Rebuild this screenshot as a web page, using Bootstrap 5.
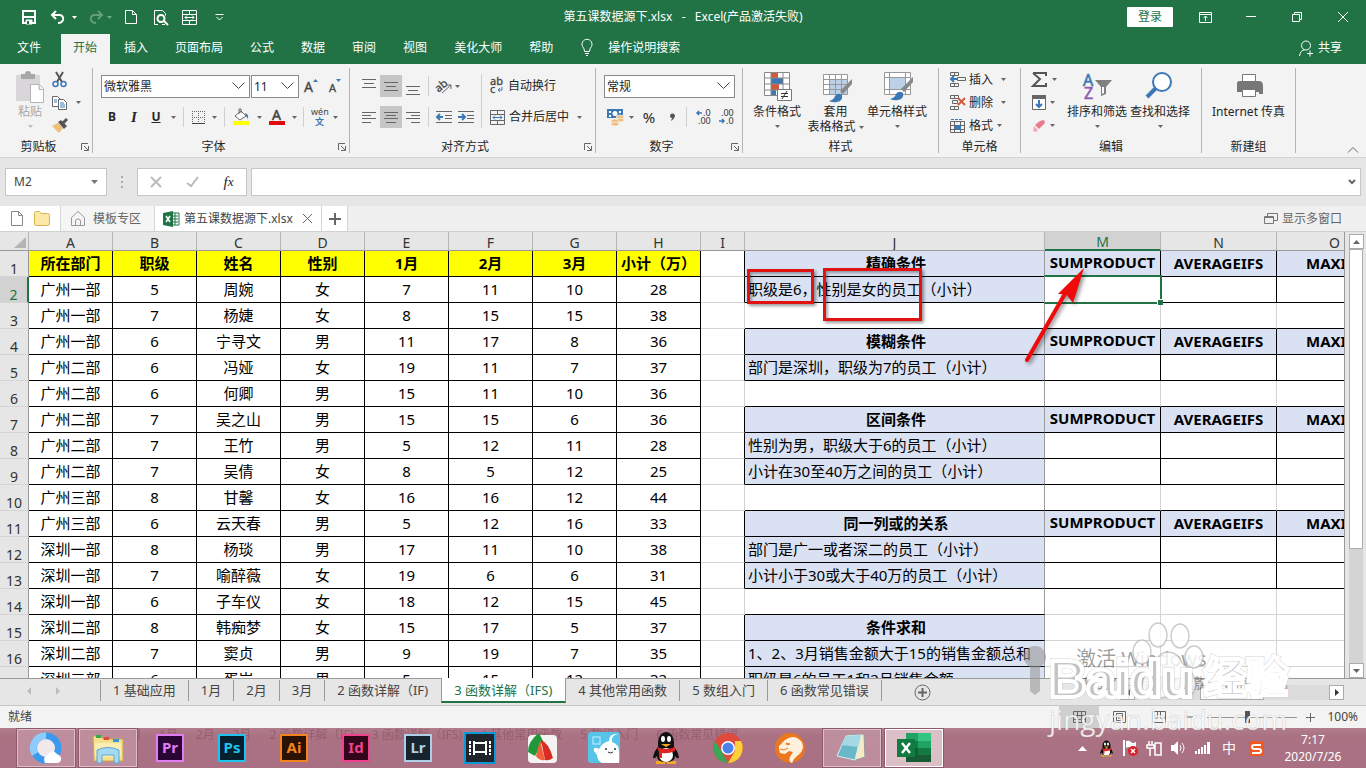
<!DOCTYPE html>
<html lang="zh-CN">
<head>
<meta charset="utf-8">
<meta name="viewport" content="width=device-width, initial-scale=1">
<title>第五课数据源下.xlsx - Excel</title>
<link href="https://cdn.jsdelivr.net/npm/bootstrap@5.3.0/dist/css/bootstrap.min.css" rel="stylesheet">
<style>
:root{--xl:#217346;--chrome:#e6e6e6;--ribbon:#f3f3f3;--ink:#262626}
body{font-family:"Noto Sans","Noto Sans CJK SC",sans-serif;font-size:12px;line-height:16px;color:var(--ink);background:#fff}
svg{display:block;flex:none;overflow:visible}
svg.ln{fill:none;stroke:#666;stroke-width:1}
button{font:inherit;color:inherit;background:none;border:0;padding:0;display:flex;align-items:center;justify-content:center;flex:none}
a{color:inherit;text-decoration:none}
.green{background:var(--xl);color:#fff}
.titlebar{height:34px}
.titleside{flex:1 1 0}
.titlebar svg.ln,.tabs svg.ln{stroke:#fff}
.s10{width:10px}.s12{width:12px}.s15{width:15px}.s20{width:20px}.s22{width:22px}.s24{width:24px}.s26{width:26px}.s30{width:30px}.s46{width:46px}
.login{background:#fff;color:var(--xl);height:20px;margin-right:9px;border-radius:1px}
.tabs{height:30px}
.tabs>a{padding:6px 13px 8px 14px;color:#fff}
.tabs>a:first-child{padding:6px 20px 8px 17px}
.tabs>a.on{background:var(--ribbon);color:var(--xl);padding:6px 13px 8px 12px}
.ribbon{height:94px;background:var(--ribbon);border-bottom:1px solid #d2d2d2;position:relative}
.grp{border-right:1px solid #b5b5b5;margin:4px 0;display:flex;flex-direction:column;flex:none}
.grp>.body{flex:1 1 0;display:flex;min-height:0}
.cap{height:12px;display:flex;align-items:center;text-align:center}
.cap>span{flex:1}
.g1{width:93px}.g2{width:257px}.g3{width:246px}.g4{width:147px}.g5{width:196px}.g6{width:82px}.g7{width:181px}.g8{width:94px}
.rows{display:flex;flex-direction:column;gap:9px;padding:7px 0 0 8px}
.rows>div{display:flex;align-items:center;height:22px}
.rows button{height:22px}
.rows button.on{background:#c6c6c6}
.three{display:flex;flex-direction:column}
.three>div{display:flex;align-items:center;height:23px}
.bar{width:1px;height:20px;background:#d0d0d0;flex:none}
.bar.tall{height:54px;margin-top:6px}
.pick{appearance:none;height:23px;border:1px solid #8a8a8a;border-radius:0;padding:1px 2px 0;font-size:12px;line-height:20px;color:#262626;background:#fff url("data:image/svg+xml,%3Csvg xmlns='http://www.w3.org/2000/svg' width='13' height='8'%3E%3Cpath d='M.5.5l6 6 6-6' fill='none' stroke='%23444'/%3E%3C/svg%3E") no-repeat right 4px center}
.pf{width:149px}.ps{width:48px;margin-left:1px}.pn{width:131px}
.big{flex-direction:column;justify-content:flex-start;padding-top:3px;line-height:15px}
.big svg.ic{width:32px;height:32px;margin-bottom:1px}
.big .car{margin-top:6px}
.big span .car{margin-top:0}
.paste svg.ic{width:28px}
.b60{width:60px}.b57{width:57px}.b66{width:66px}
.car{width:5px;height:3px;fill:#666}
.serif{font-family:"Liberation Serif",serif;font-size:15px;font-style:italic}
.fbar{background:var(--chrome);height:48px;padding:10px 5px}
.fbar .bx{border:1px solid #c6c6c6;background:#fff;height:28px;display:flex;align-items:center}
.fbar input{border:0;outline:0;background:none;min-width:0;color:#444;font-size:12px}
.fbar .dots{margin:0 14px 0 15px}
.namebox{width:102px}.fxbox{width:110px}
.docs{height:26px;background:#f0f0f0;border-bottom:1px solid #d0d0d0;color:#666}
.docs>div{height:25px;display:flex;align-items:center;border-right:1px solid #d5d5d5}
.docs .wh{background:#fff}
.dk1{width:61px}.dk2{width:94px;background:#f5f5f5}.dk3{width:167px}
.sheetwrap{flex:1 1 0;min-height:0;position:relative}
.view{flex:1 1 0;min-width:0;overflow:hidden;position:relative}
.grid{table-layout:fixed;width:1393px;border-collapse:separate;border-spacing:0;font-size:15px;line-height:20px;color:#000}
.grid td,.grid th{padding:0 0 2px;height:26px;border:solid #d4d4d4;border-width:0 1px 1px 0;text-align:center;white-space:nowrap;overflow:hidden;vertical-align:middle;font-weight:400}
.grid thead th{height:19px;line-height:15px;background:var(--chrome);color:#333;border-color:#b4b4b4;border-bottom-color:#999;font-size:14px;padding:2px 0 0}
.grid tbody th{background:var(--chrome);color:#333;border-right-color:#999;vertical-align:bottom;line-height:15px;font-size:14px;padding-bottom:0}
.grid tbody td:nth-child(-n+9){border-color:#000}
.grid td:nth-child(11){border-right-color:#999;text-align:left;padding-left:3px}
.grid .hd td:nth-child(n+11),.grid .top td{font-weight:700}
.grid .hd td:nth-child(11){text-align:center}
.grid .hd td:nth-child(12){padding-bottom:3px}
.grid .hd td:nth-child(10),.grid .dt td:nth-child(10){border-right-color:#000}
.grid .hd td:nth-child(11),.grid .dt td:nth-child(11){background:#d9e1f2;border-bottom-color:#000}
.grid .gp td:nth-child(11){border-bottom-color:#000}
.grid .hd:not(.solo) td:nth-child(n+12){background:#d9e1f2;border-color:#000}
.grid .dt:not(.solo) td:nth-child(n+12){border-color:#000}
.grid .gp:not(.solo) td:nth-child(n+12){border-bottom-color:#000}
.grid .top td:nth-child(-n+9){background:#ff0}
.grid thead th.cur{background:#d2d2d2;color:var(--xl);border-bottom:2px solid var(--xl)}
.grid tbody th.cur{background:#d2d2d2;color:var(--xl);border-right:2px solid var(--xl)}
.corner{fill:#b4b4b4;margin-left:14px}
.cw-h{width:29px}.cw-a{width:84px}.cw-i{width:44px}.cw-j{width:300px}.cw-m{width:116px}
.selbox{position:absolute;left:1044px;top:43px;width:118px;height:29px;border:2px solid var(--xl);border-left-color:#999;border-left-width:1px}
.selbox::after{content:"";position:absolute;right:-3px;bottom:-3px;width:6px;height:6px;background:var(--xl);border:solid #fff;border-width:1px 0 0 1px}
.mark-red{position:absolute;border:3px solid #e01212;box-shadow:2px 2px 3px #0006,inset 2px 2px 3px #0005}
.m1{left:747px;top:37px;width:67px;height:35px}
.m2{left:823px;top:36px;width:99px;height:53px}
.arrow{position:absolute;left:1020px;top:30px;filter:drop-shadow(2px 2px 2px #0007)}
.vsb{width:22px;background:var(--chrome);border-left:1px solid #999;padding:2px 3px 0 4px}
.vsb .ab,.hsb .ab{width:15px;height:15px;background:#fff;border:1px solid #ababab}
.vsb .th{height:300px;background:#fff;border:1px solid #ababab}
.vsb .tr{flex:1;background:#d4d4d4}
.sheets{height:28px;background:var(--chrome);border-top:1px solid #999;border-bottom:1px solid #c6c6c6;font-size:13px;color:#444}
.sheets>a{height:24px;line-height:22px;padding:0 13px 0 12px;position:relative}
.sheets>a:not(.on)::after{content:"";position:absolute;right:0;top:1px;height:21px;border-right:1px solid #999}
.sheets>a.on{background:#fff;color:var(--xl);border-bottom:2px solid var(--xl);height:25px;margin-top:-1px;border-left:1px solid #999;border-right:1px solid #999;line-height:24px}
.sheets>a.pre::after{display:none}
.navs{width:101px;border-right:1px solid #999;height:21px;margin-top:1px;padding-left:27px}
.addsheet{margin-left:32px}
.hsb{width:224px;margin-right:22px;background:#dcdcdc;height:15px}
.hsb .th{width:64px;height:15px;background:#fff;border:1px solid #ababab;margin-left:65px}
.status{height:22px;background:var(--ribbon);color:#444}
.status input{width:90px;height:12px;appearance:none;background:linear-gradient(#999,#999) center/100% 1px no-repeat}
.status input::-webkit-slider-thumb{appearance:none;width:5px;height:12px;background:#555}
.vw{width:40px;height:22px}
.vw.on{background:#cfcfcf}
.task{height:40px;background:linear-gradient(#b17d8c,#aa7283 20%,#a87082);color:#fff;position:relative;padding-left:15px}
.task .ap{width:62px;height:40px;position:relative}
.task .ap.run{width:58px;height:38px;margin:1px 2px;background:#c395a4cc;border:1px solid #dcbfc8;outline:1px solid #8c5a6a}
.task .ap.front{background:#dcc0c8;border-color:#fff}
.ghost{position:absolute;left:83px;top:-1px;font-size:12px;color:#7a4455;opacity:.45;display:flex;gap:18px;white-space:nowrap}
.tray>span{width:24px;height:20px;display:flex;align-items:center;justify-content:center}
.tray>.ime{width:30px;font-size:14px}
.clock{width:74px;text-align:center;font-size:12px;line-height:17px}
.adobe{width:28px;height:28px;border:2px solid;font-size:15px;font-weight:700;line-height:22px;text-align:center;display:block}
.pr{color:#e27cf5;background:#2a0634}.psd{color:#22c3ee;background:#04202c}.ai{color:#f58220;background:#2b1204}.idd{color:#f04090;background:#330518}.lr{color:#aed0e6;background:#172430}
.wm{position:absolute;right:66px;bottom:18px;pointer-events:none}
.wm .brand{font-family:"Liberation Sans","Noto Sans CJK SC",sans-serif;font-weight:700}
.wm .site{font-family:"Open Sans",sans-serif}
</style>
</head>
<body class="vh-100 d-flex flex-column overflow-hidden">

<header class="green">
  <div class="titlebar d-flex align-items-center">
    <div class="titleside d-flex align-items-center">
      <button class="s22 ms-3 me-1" aria-label="保存"><svg class="ln ms-1" width="14" height="14"><path d="M1 1h12v12H1z" stroke-width="2"/><path d="M2 7h10" stroke-width="2"/><path d="M4 10h6v4H4z" fill="#fff"/><path d="M5 11h2v3H5z" fill="#217346" stroke="none"/></svg></button>
      <button class="s22 ms-1" aria-label="撤消"><svg class="ln" width="15" height="14"><path d="M2 5h8q4 1 3 5-1 3-5 3M6 1L2 5l4 4" stroke-width="2"/></svg></button>
      <svg class="car ms-1" style="fill:#fff" viewBox="0 0 5 3"><path d="M0 0h5L2.500 3z"/></svg>
      <button class="s22 ms-2" aria-label="恢复"><svg class="ln" width="15" height="14" opacity=".3"><path d="M13 5H5Q1 6 2 10q1 3 5 3M9 1l4 4-4 4" stroke-width="2"/></svg></button>
      <svg class="car" style="fill:#fff;opacity:.4" viewBox="0 0 5 3"><path d="M0 0h5L2.500 3z"/></svg>
      <button class="s30 ms-1" aria-label="新建"><svg class="ln" width="12" height="14"><path d="M.5.5h7l4 4v9H.5zM7.500.5v4h4"/></svg></button>
      <button class="s30" aria-label="打印预览"><svg class="ln" width="14" height="15"><path d="M4 14.500H.5V.5h8l3 3v2M8 14.500h3"/><circle cx="7" cy="8.500" r="3.500" stroke-width="2"/><path d="M10 11l4 4" stroke-width="2"/></svg></button>
      <button class="s26" aria-label="合并"><svg class="ln" width="15" height="15"><path d="M.5.5h14v14H.5zM.5 4.500h14M.5 10.500h14M7.500.5v4M7.500 10.500v4M3 7.500h9M5 5.500l-2 2 2 2M10 5.500l2 2-2 2"/></svg></button>
      <button class="s30" aria-label="自定义"><svg class="ln ms-1" width="9" height="7"><path d="M.5.5h8M1.500 3l3 3 3-3"/></svg></button>
    </div>
    <div style="white-space:pre">第五课数据源下.xlsx   -   Excel(产品激活失败)</div>
    <div class="titleside d-flex align-items-center justify-content-end">
      <button class="login s46">登录</button>
      <button class="s46" aria-label="功能区"><svg class="ln" width="13" height="11"><path d="M.5.5h12v10H.5zM.5 2.500h12M6.500 9V4M4.500 6l2-2 2 2"/></svg></button>
      <button class="s46" aria-label="最小化"><svg class="ln" width="10" height="2"><path d="M0 .5h10"/></svg></button>
      <button class="s46" aria-label="还原"><svg class="ln" width="10" height="10"><path d="M.5 2.500h7v7h-7zM2.500 2.500v-2h7v7h-2"/></svg></button>
      <button class="s46" aria-label="关闭"><svg class="ln" width="10" height="10"><path d="M0 0l10 10M10 0L0 10"/></svg></button>
    </div>
  </div>
  <nav class="tabs d-flex">
    <a href="#">文件</a><a href="#" class="on">开始</a><a href="#">插入</a><a href="#">页面布局</a><a href="#">公式</a><a href="#">数据</a><a href="#">审阅</a><a href="#">视图</a><a href="#">美化大师</a><a href="#">帮助</a>
    <a href="#" class="d-flex"><svg class="ln me-3" width="12" height="16"><path d="M3.500 12.500q0-3-2-5a5 5 0 1 1 9 0q-2 2-2 5zM4 14.500h4M5 16.500h2" transform="translate(1 -1)"/></svg>操作说明搜索</a>
    <a href="#" class="d-flex ms-auto pe-4"><svg class="ln me-1" width="15" height="16"><circle cx="7" cy="5.500" r="4.500"/><path d="M.5 16q1-6 5-6M8 13.500h6M11 10.500v6"/></svg>共享</a>
  </nav>
</header>

<section class="ribbon d-flex">
  <div class="grp g1">
    <div class="body">
      <button class="big paste ps-3 pe-2" style="color:#a8a8a8"><svg class="ic" viewBox="0 0 28 32"><path d="M0 4h24v26H0z" fill="#d9d6d9"/><path d="M5 3h4a3 3 0 0 1 6 0h4v5H5z" fill="#a8a8a8"/><path d="M14.500 13.500h9l4 4v14h-13zM23 13.500v5h4" fill="#fff" stroke="#b4b4b4"/></svg>粘贴<svg class="car" style="fill:#bbb" viewBox="0 0 5 3"><path d="M0 0h5L2.500 3z"/></svg></button>
      <div class="three">
        <div><svg width="16" height="16"><path d="M4 0l6 10M11 0L5 10" stroke="#555" stroke-width="2"/><g fill="none" stroke="#3b78b5" stroke-width="1.500"><circle cx="3.500" cy="12" r="2.500"/><circle cx="11.500" cy="12" r="2.500"/></g></svg></div>
        <div><svg class="ln" width="16" height="16"><path d="M.5 1.500h5l3 3v7h-8z" fill="#fff"/><path d="M6.500 4.500h5l3 3v7h-8z" fill="#fff"/><path d="M2 5h3M2 7h3M8 8h4M8 10h5M8 12h5" stroke="#3b78b5"/></svg><svg class="car ms-2" viewBox="0 0 5 3"><path d="M0 0h5L2.500 3z"/></svg></div>
        <div><svg width="17" height="15"><path d="M0 8l6-3 5 5-4 5z" fill="#eec078"/><path d="M6 4l3-2 6 6-3 3z" fill="#555"/><path d="M11 5l4-4" stroke="#555" stroke-width="3"/></svg></div>
      </div>
    </div>
    <div class="cap"><span>剪贴板</span><button class="s15" aria-label="剪贴板选项"><svg class="ln" width="8" height="8"><path d="M.5 7V.5H7M3 3l4 4M7.500 3v4.500H3"/></svg></button></div>
  </div>

  <div class="grp g2">
    <div class="body rows">
      <div>
        <select class="pick pf" aria-label="字体"><option>微软雅黑</option></select><select class="pick ps" aria-label="字号"><option>11</option></select>
        <button class="s24" aria-label="增大字号"><svg width="14" height="14"><text x="0" y="13" font-size="14" fill="#444" stroke="#444" stroke-width=".3">A</text><path d="M9 3h5L11.500 0z" fill="#3b78b5"/></svg></button>
        <button class="s24" aria-label="减小字号"><svg width="12" height="14"><text x="0" y="13" font-size="11" fill="#444" stroke="#444" stroke-width=".3">A</text><path d="M7 0h5L9.500 3z" fill="#3b78b5"/></svg></button>
      </div>
      <div>
        <button class="s22 fw-bold">B</button><button class="s22 serif fw-bold">I</button><button class="s22 text-decoration-underline fw-bold">U</button><button class="s12" aria-label="下划线"><svg class="car" viewBox="0 0 5 3"><path d="M0 0h5L2.500 3z"/></svg></button>
        <i class="bar mx-1"></i>
        <button class="s20" aria-label="边框"><svg class="ln" width="13" height="13"><path d="M.5 0v12M6.500 0v12M12.500 0v12M0 .5h13M0 6.500h13" stroke-dasharray="1 1"/><path d="M0 12.500h13" stroke="#444"/></svg></button><button class="s12" aria-label="边框选项"><svg class="car" viewBox="0 0 5 3"><path d="M0 0h5L2.500 3z"/></svg></button>
        <i class="bar mx-1"></i>
        <button class="s24" aria-label="填充颜色"><svg width="16" height="16"><path d="M2 7l6-5 5 5-6 4z" fill="#fff" stroke="#666"/><path d="M6 5V0h2v4" fill="none" stroke="#666"/><path d="M12 4q4 1 3 6l-2-3z" fill="#3b78b5"/><path d="M0 12h16v4H0z" fill="#ff0"/></svg></button><button class="s12" aria-label="填充选项"><svg class="car" viewBox="0 0 5 3"><path d="M0 0h5L2.500 3z"/></svg></button>
        <button class="s24" aria-label="字体颜色"><svg width="16" height="16"><text x="3" y="11" font-size="14" fill="#444" stroke="#444" stroke-width=".5">A</text><path d="M0 12h16v4H0z" fill="#e00b0b"/></svg></button><button class="s10" aria-label="字体颜色选项"><svg class="car" viewBox="0 0 5 3"><path d="M0 0h5L2.500 3z"/></svg></button>
        <i class="bar mx-1"></i>
        <button class="s22" aria-label="拼音"><svg width="16" height="16"><text x="0" y="6" font-size="9" fill="#444">wén</text><text x="4" y="16" font-size="9" font-weight="700" fill="#3b78b5">文</text></svg></button><button class="s10" aria-label="拼音选项"><svg class="car" viewBox="0 0 5 3"><path d="M0 0h5L2.500 3z"/></svg></button>
      </div>
    </div>
    <div class="cap"><span>字体</span><button class="s15" aria-label="字体选项"><svg class="ln" width="8" height="8"><path d="M.5 7V.5H7M3 3l4 4M7.500 3v4.500H3"/></svg></button></div>
  </div>

  <div class="grp g3">
    <div class="body">
      <div class="rows" style="width:131px">
        <div>
          <button class="s22" aria-label="顶端对齐"><svg class="ln" width="14" height="14"><path d="M0 .5h14M2 4.500h10M0 8.500h14"/></svg></button><button class="s22 on" aria-label="垂直居中"><svg class="ln" width="14" height="14"><path d="M0 3.500h14M2 7.500h10M0 11.500h14"/></svg></button><button class="s22" aria-label="底端对齐"><svg class="ln" width="14" height="14"><path d="M0 7.500h14M2 11.500h10M0 15.500h14"/></svg></button>
          <i class="bar mx-1"></i>
          <button class="s22" aria-label="方向"><svg width="16" height="15"><text x="0" y="11" font-size="11" fill="#444" stroke="#444" stroke-width=".3" transform="rotate(-40 5 9)">ab</text><path d="M6 14L15 6M11 6h4v4" fill="none" stroke="#666"/></svg></button><svg class="car" viewBox="0 0 5 3"><path d="M0 0h5L2.500 3z"/></svg>
        </div>
        <div>
          <button class="s22" aria-label="左对齐"><svg class="ln" width="14" height="11"><path d="M0 .5h14M0 3.500h9M0 6.500h14M0 10.500h9"/></svg></button><button class="s22 on" aria-label="居中"><svg class="ln" width="14" height="11"><path d="M0 .5h14M2 3.500h10M0 6.500h14M2 10.500h10"/></svg></button><button class="s22" aria-label="右对齐"><svg class="ln" width="14" height="11"><path d="M0 .5h14M5 3.500h9M0 6.500h14M5 10.500h9"/></svg></button>
          <i class="bar mx-1"></i>
          <button class="s22" aria-label="减少缩进"><svg class="ln" width="16" height="12"><path d="M0 .5h16M9 4.500h7M9 7.500h7M0 11.500h16"/><path d="M7 6H1M4 3L1 6l3 3" stroke="#3b78b5" stroke-width="2"/></svg></button><button class="s22" aria-label="增加缩进"><svg class="ln" width="16" height="12"><path d="M0 .5h16M9 4.500h7M9 7.500h7M0 11.500h16"/><path d="M0 6h6M4 3l3 3-3 3" stroke="#3b78b5" stroke-width="2"/></svg></button>
        </div>
      </div>
      <i class="bar tall"></i>
      <div class="rows">
        <div><button><svg class="me-1" width="14" height="16"><text x="0" y="7" font-size="11" fill="#444" stroke="#444" stroke-width=".3">ab</text><text x="0" y="15" font-size="11" fill="#444" stroke="#444" stroke-width=".3">c</text><path d="M12 9v3H8M10 10l-2 2 2 2" fill="none" stroke="#3b78b5"/></svg>自动换行</button></div>
        <div><button><svg class="ln me-1" width="15" height="15"><path d="M.5.5h14v14H.5zM.5 4.500h14M.5 10.500h14M7.500.5v4M7.500 10.500v4"/><path d="M3 7.500h9M5 5.500l-2 2 2 2M10 5.500l2 2-2 2" stroke="#3b78b5"/></svg>合并后居中</button><svg class="car ms-2" viewBox="0 0 5 3"><path d="M0 0h5L2.500 3z"/></svg></div>
      </div>
    </div>
    <div class="cap"><span>对齐方式</span><button class="s15" aria-label="对齐选项"><svg class="ln" width="8" height="8"><path d="M.5 7V.5H7M3 3l4 4M7.500 3v4.500H3"/></svg></button></div>
  </div>

  <div class="grp g4">
    <div class="body rows">
      <div><select class="pick pn" aria-label="数字格式"><option>常规</option></select></div>
      <div>
        <button class="s22" aria-label="会计格式"><svg width="17" height="16"><path d="M0 0h16v9H0z" fill="#3b78b5"/><path d="M2 2h2v2H2zM12 2h2v2h-2zM2 6h2v2H2z" fill="#fff"/><circle cx="8" cy="4.500" r="2.500" fill="#fff"/><g fill="#edbf7b" stroke="#f3f3f3" stroke-width=".7"><ellipse cx="13" cy="8" rx="4" ry="2"/><ellipse cx="13" cy="11" rx="4" ry="2"/><ellipse cx="8" cy="12" rx="4" ry="2"/><ellipse cx="8" cy="15" rx="4" ry="2"/></g></svg></button><button class="s10" aria-label="会计选项"><svg class="car" viewBox="0 0 5 3"><path d="M0 0h5L2.500 3z"/></svg></button>
        <button class="s26" style="font-size:15px">%</button><button class="s20" aria-label="千位分隔"><svg width="5" height="8"><path d="M0 3a2.500 2.500 0 1 1 4 2Q3 7 1 8L2 5Q0 5 0 3" fill="#555"/></svg></button>
        <i class="bar mx-1"></i>
        <button class="s26" aria-label="增加小数"><svg width="16" height="16"><text x="7" y="7" font-size="9" fill="#333">.0</text><text x="2" y="15" font-size="9" fill="#333">.00</text><path d="M6 4H1M3 2L1 4l2 2" fill="none" stroke="#3b78b5" stroke-width="1.500"/></svg></button>
        <button class="s20" aria-label="减少小数"><svg width="16" height="16"><text x="2" y="7" font-size="9" fill="#333">.00</text><text x="7" y="15" font-size="9" fill="#333">.0</text><path d="M0 12h5M3 10l2 2-2 2" fill="none" stroke="#3b78b5" stroke-width="1.500"/></svg></button>
      </div>
    </div>
    <div class="cap"><span>数字</span><button class="s15" aria-label="数字选项"><svg class="ln" width="8" height="8"><path d="M.5 7V.5H7M3 3l4 4M7.500 3v4.500H3"/></svg></button></div>
  </div>

  <div class="grp g5">
    <div class="body ps-1">
      <button class="big b60"><svg class="ic" viewBox="0 0 32 32"><path d="M3.500 1.500h25v23h-25z" fill="#fff"/><path d="M10 1h7v6h-7zM10 13h8v6h-8z" fill="#d2593c"/><path d="M10 7h12v6H10zM10 19h5v6h-5z" fill="#3b78b5"/><path d="M3.500 1.500h25v23h-25zM3.500 7h25M3.500 13h25M3.500 19h25M10 1v24M22 1v24" fill="none" stroke="#888"/><path d="M16.500 18.500h14v11h-14z" fill="#fff" stroke="#777"/><path d="M20 22.500h7M20 25.500h7M26 20l-5 8" stroke="#333"/></svg>条件格式<svg class="car" viewBox="0 0 5 3"><path d="M0 0h5L2.500 3z"/></svg></button>
      <button class="big b57"><svg class="ic" viewBox="0 0 32 32"><path d="M3.500 3.500h24v20h-24z" fill="#fff"/><path d="M9 8h18v15H9z" fill="#bcd0e8"/><path d="M3.500 3.500h24v20h-24zM3.500 8.500h24M3.500 13.500h24M3.500 18.500h24M9.500 3v20M15.500 3v20M21.500 3v20" fill="none" stroke="#999"/><path d="M32 8v5L23 23l-3-3z" fill="#888"/><path d="M9 30q5-1 6-5 3-4 7-1 1 6-5 7-4 1-8-1" fill="#3b78b5"/></svg><span>套用<br>表格格式 <svg class="car d-inline-block align-middle" viewBox="0 0 5 3"><path d="M0 0h5L2.500 3z"/></svg></span></button>
      <button class="big b66"><svg class="ic" viewBox="0 0 32 32"><path d="M3.500 1.500h26v22h-26z" fill="#fff"/><path d="M3.500 1.500h26v22h-26zM3.500 6.500h26M3.500 18.500h26M8.500 1v22M24.500 1v22" fill="none" stroke="#999"/><path d="M9 7h15v11H9z" fill="#bcd0e8"/><path d="M32 6v5L23 21l-3-3z" fill="#888"/><path d="M9 28q5-1 6-5 3-4 7-1 1 6-5 7-4 1-8-1" fill="#3b78b5"/></svg>单元格样式<svg class="car" viewBox="0 0 5 3"><path d="M0 0h5L2.500 3z"/></svg></button>
    </div>
    <div class="cap"><span>样式</span></div>
  </div>

  <div class="grp g6">
    <div class="body three" style="padding-left:11px">
      <div><button><svg class="ln me-1" width="15" height="15"><path d="M.5.5h8v3h-8zM.5 11.500h8v3h-8zM4.500 0v3.500M4.500 11v4M7.500 5.500h8v3h-8z"/><path d="M7 7H1M4 4L1 7l3 3" stroke="#3b78b5" stroke-width="2"/></svg>插入</button><svg class="car ms-2" viewBox="0 0 5 3"><path d="M0 0h5L2.500 3z"/></svg></div>
      <div><button><svg class="ln me-1" width="15" height="15"><path d="M.5.5h8v3h-8zM.5 11.500h8v3h-8zM4.500 0v3.500M4.500 11v4M2.500 5.500h5v3h-5z"/><path d="M8 3l7 7M15 3l-7 7" stroke="#d2593c" stroke-width="2"/></svg>删除</button><svg class="car ms-2" viewBox="0 0 5 3"><path d="M0 0h5L2.500 3z"/></svg></div>
      <div><button><svg class="ln me-1" width="15" height="15"><path d="M.5 3.500h14v11H.5zM.5 7.500h14M.5 11.500h14M4.500 3v11M10.500 3v11"/><path d="M1 1.500h12" stroke="#3b78b5" stroke-dasharray="3 1"/><path d="M5 7h6v5H5z" fill="#3b78b5" stroke="none"/></svg>格式</button><svg class="car ms-1" viewBox="0 0 5 3"><path d="M0 0h5L2.500 3z"/></svg></div>
    </div>
    <div class="cap"><span>单元格</span></div>
  </div>

  <div class="grp g7">
    <div class="body">
      <div class="three" style="width:43px;padding-left:11px">
        <div><svg width="16" height="15"><path d="M1 1h13v3M1 1l7 6-7 7h13v-3" fill="none" stroke="#555" stroke-width="2"/></svg><svg class="car ms-1" viewBox="0 0 5 3"><path d="M0 0h5L2.500 3z"/></svg></div>
        <div><svg class="ln" width="14" height="15"><path d="M.5.5h13v14H.5z" fill="#fff"/><path d="M0 2h14" stroke-width="4"/><path d="M7 5v7M4 9l3 3 3-3" stroke="#3b78b5" stroke-width="2"/></svg><svg class="car ms-1" viewBox="0 0 5 3"><path d="M0 0h5L2.500 3z"/></svg></div>
        <div><svg width="14" height="14"><path d="M8 2l4-1 1 3-6 6-4-4z" fill="#ea7a8e"/><path d="M2 7l4 4-2 2-3-1z" fill="#f0aab6"/></svg><svg class="car ms-1" viewBox="0 0 5 3"><path d="M0 0h5L2.500 3z"/></svg></div>
      </div>
      <button class="big b66"><svg class="ic" viewBox="0 0 32 32"><text x="2" y="15" font-size="16" fill="#3b78b5" stroke="#3b78b5" stroke-width=".6">A</text><text x="3" y="28" font-size="16" fill="#8e5ab0" stroke="#8e5ab0" stroke-width=".6">Z</text><path d="M14 9h17l-6 7v7l-5 2v-9z" fill="#808080"/><path d="M21 16h2v6l-2 1z" fill="#fff"/></svg>排序和筛选<svg class="car" viewBox="0 0 5 3"><path d="M0 0h5L2.500 3z"/></svg></button>
      <button class="big b60"><svg class="ic" viewBox="0 0 32 32"><circle cx="18" cy="11" r="9" fill="#fff" stroke="#3b78b5" stroke-width="2"/><path d="M12 17L3 26" stroke="#3b78b5" stroke-width="4"/></svg>查找和选择<svg class="car" viewBox="0 0 5 3"><path d="M0 0h5L2.500 3z"/></svg></button>
    </div>
    <div class="cap"><span>编辑</span></div>
  </div>

  <div class="grp g8">
    <div class="body justify-content-center"><button class="big"><svg class="ic" viewBox="0 0 32 32"><path d="M4 12q0-2 3-2h19q4 0 4 5v8h-4v-7H4z" fill="#777"/><path d="M4 12h22v9H4z" fill="#777"/><path d="M9.500 3.500h13v7h-13zM9.500 18.500h13v7h-13z" fill="#fff" stroke="#777"/></svg>Internet 传真</button></div>
    <div class="cap"><span>新建组</span></div>
  </div>
  <button class="ms-auto align-self-end mb-1 me-2" aria-label="折叠功能区"><svg class="ln" width="10" height="6"><path d="M0 5.500l5-5 5 5"/></svg></button>
</section>

<section class="fbar d-flex">
  <div class="bx namebox px-1"><input class="flex-fill ps-1" value="M2" aria-label="名称框"><svg class="me-1" width="7" height="4" fill="#777"><path d="M0 0h7L3.500 4z"/></svg></div>
  <svg class="dots align-self-center" width="1" height="14"><path d="M0 1h2M0 6h2M0 11h2" stroke="#aaa" stroke-width="2" transform="translate(-1 1)"/></svg>
  <div class="bx fxbox justify-content-around me-1">
    <button aria-label="取消"><svg width="10" height="10" stroke="#bbb" stroke-width="2"><path d="M0 0l10 10M10 0L0 10"/></svg></button>
    <button aria-label="输入"><svg width="13" height="10" fill="none" stroke="#bbb" stroke-width="2"><path d="M1 6l4 3 7-9"/></svg></button>
    <button aria-label="插入函数" class="serif">f<small>x</small></button>
  </div>
  <div class="bx flex-fill"><input class="flex-fill px-2" aria-label="编辑栏"><svg class="me-1" width="8" height="6" fill="none" stroke="#666" stroke-width="2"><path d="M1 1l3 3 3-3"/></svg></div>
</section>

<section class="docs d-flex">
  <div class="wh dk1"><svg class="ms-2" width="18" height="16" viewBox="-3 0 18 16" fill="#fff" stroke="#888"><path d="M.5.5h7l4 4v10H.5zM7.500.5v4h4"/></svg><svg class="ms-2" width="17" height="15"><path d="M.5 2.500q0-2 2-2h3l2 2h6q2 0 2 2v8q0 2-2 2h-11q-2 0-2-2z" fill="#fce9a6" stroke="#d8b04c"/></svg></div>
  <div class="dk2"><svg class="mx-2" width="16" height="16" viewBox="-2 0 16 16" fill="none" stroke="#999"><path d="M.5 6.500l6.500-6 6.500 6v8H.5zM4.500 14v-4q0-2 2.500-2t2.500 2v4"/></svg>模板专区</div>
  <div class="wh dk3"><svg class="ms-2 me-1" width="17" height="16"><path d="M9 2h7v12H9z" fill="#fff" stroke="#217346"/><path d="M9 5h6M9 8h6M9 11h6M12 2v12" stroke="#217346"/><path d="M0 2l10-2v16L0 14z" fill="#217346"/><path d="M3 5l4 6M7 5l-4 6" stroke="#fff" stroke-width="1.500"/></svg><span style="color:#444">第五课数据源下.xlsx</span><button class="ms-auto me-2" aria-label="关闭标签"><svg width="11" height="11" stroke="#666"><path d="M1 1l9 9M10 1l-9 9"/></svg></button></div>
  <div class="wh justify-content-center s26"><button aria-label="新建标签"><svg width="12" height="12" stroke="#666" stroke-width="2"><path d="M0 6h12M6 0v12"/></svg></button></div>
  <button class="ms-auto me-4"><svg class="me-1" width="14" height="11" fill="none" stroke="#777"><path d="M.5 3.500h9v7h-9zM3.500 3v-2.500h10v7h-4M.5 4.500h9"/></svg>显示多窗口</button>
</section>

<main class="sheetwrap d-flex">
  <div class="view">
    <table class="grid">
      <colgroup><col class="cw-h"><col span="8" class="cw-a"><col class="cw-i"><col class="cw-j"><col span="3" class="cw-m"></colgroup>
      <thead><tr><th><svg class="corner" width="12" height="11"><path d="M12 0v11H0z"/></svg><th>A<th>B<th>C<th>D<th>E<th>F<th>G<th>H<th>I<th>J<th class="cur">M<th>N<th>O</tr></thead>
      <tbody>
      <tr class="hd top"><th>1<td>所在部门<td>职级<td>姓名<td>性别<td>1月<td>2月<td>3月<td>小计（万）<td><td>精确条件<td>SUMPRODUCT<td>AVERAGEIFS<td>MAXIFS
      <tr class="dt"><th class="cur">2<td>广州一部<td>5<td>周婉<td>女<td>7<td>11<td>10<td>28<td><td>职级是6，性别是女的员工（小计）<td><td><td>
      <tr class="gp"><th>3<td>广州一部<td>7<td>杨婕<td>女<td>8<td>15<td>15<td>38<td><td><td><td><td>
      <tr class="hd"><th>4<td>广州一部<td>6<td>宁寻文<td>男<td>11<td>17<td>8<td>36<td><td>模糊条件<td>SUMPRODUCT<td>AVERAGEIFS<td>MAXIFS
      <tr class="dt"><th>5<td>广州二部<td>6<td>冯娅<td>女<td>19<td>11<td>7<td>37<td><td>部门是深圳，职级为7的员工（小计）<td><td><td>
      <tr class="gp"><th>6<td>广州二部<td>6<td>何卿<td>男<td>15<td>11<td>10<td>36<td><td><td><td><td>
      <tr class="hd"><th>7<td>广州二部<td>7<td>吴之山<td>男<td>15<td>15<td>6<td>36<td><td>区间条件<td>SUMPRODUCT<td>AVERAGEIFS<td>MAXIFS
      <tr class="dt"><th>8<td>广州二部<td>7<td>王竹<td>男<td>5<td>12<td>11<td>28<td><td>性别为男，职级大于6的员工（小计）<td><td><td>
      <tr class="dt"><th>9<td>广州二部<td>7<td>吴倩<td>女<td>8<td>5<td>12<td>25<td><td>小计在30至40万之间的员工（小计）<td><td><td>
      <tr class="gp"><th>10<td>广州三部<td>8<td>甘馨<td>女<td>16<td>16<td>12<td>44<td><td><td><td><td>
      <tr class="hd"><th>11<td>广州三部<td>6<td>云天春<td>男<td>5<td>12<td>16<td>33<td><td>同一列或的关系<td>SUMPRODUCT<td>AVERAGEIFS<td>MAXIFS
      <tr class="dt"><th>12<td>深圳一部<td>8<td>杨琰<td>男<td>17<td>11<td>10<td>38<td><td>部门是广一或者深二的员工（小计）<td><td><td>
      <tr class="dt"><th>13<td>深圳一部<td>7<td>喻醉薇<td>女<td>19<td>6<td>6<td>31<td><td>小计小于30或大于40万的员工（小计）<td><td><td>
      <tr class="gp solo"><th>14<td>深圳一部<td>6<td>子车仪<td>女<td>18<td>12<td>15<td>45<td><td><td><td><td>
      <tr class="hd solo"><th>15<td>深圳二部<td>8<td>韩痴梦<td>女<td>15<td>17<td>5<td>37<td><td>条件求和<td><td><td>
      <tr class="dt solo"><th>16<td>深圳二部<td>7<td>窦贞<td>男<td>9<td>19<td>7<td>35<td><td>1、2、3月销售金额大于15的销售金额总和<td><td><td>
      <tr class="dt solo"><th>17<td>深圳三部<td>6<td>蛋岩<td>男<td>5<td>15<td>12<td>32<td><td>职级是6的员工1和2月销售金额<td><td><td>
      </tbody>
    </table>
    <div class="selbox"></div>
    <div class="mark-red m1"></div>
    <div class="mark-red m2"></div>
    <svg class="arrow" width="75" height="106" viewBox="0 0 75 106"><path d="M7 98L46 30" stroke="#f00b0b" stroke-width="4" stroke-linecap="round"/><path d="M64 6L38 32l8 0 7 9z" fill="#f00b0b"/></svg>
  </div>
  <div class="vsb d-flex flex-column">
    <button class="ab" aria-label="向上滚动"><svg width="7" height="4" fill="#666"><path d="M0 4h7L3.500 0z"/></svg></button>
    <div class="th"></div><div class="tr"></div>
    <button class="ab" aria-label="向下滚动"><svg width="7" height="4" fill="#666"><path d="M0 0h7L3.500 4z"/></svg></button>
  </div>
</main>

<nav class="sheets d-flex">
  <div class="navs d-flex align-items-center"><svg width="5" height="8" fill="#bbb"><path d="M4 0v8L0 4z"/></svg><svg width="5" height="8" fill="#bbb" class="ms-4"><path d="M0 0v8l4-4z"/></svg></div>
  <a href="#">1 基础应用</a><a href="#">1月</a><a href="#">2月</a><a href="#">3月</a><a href="#" class="pre">2 函数详解（IF)</a><a href="#" class="on">3 函数详解（IFS)</a><a href="#">4 其他常用函数</a><a href="#">5 数组入门</a><a href="#">6 函数常见错误</a>
  <button class="addsheet align-self-center" aria-label="新工作表"><svg class="ln" width="17" height="17"><circle cx="8.500" cy="8.500" r="7.500"/><path d="M4 8.500h9M8.500 4v9" stroke-width="2"/></svg></button>
  <div class="hsb d-flex ms-auto align-self-center">
    <button class="ab" aria-label="向左滚动"><svg width="4" height="7" fill="#666"><path d="M4 0v7L0 3.500z"/></svg></button><div class="th"></div><button class="ab ms-auto" aria-label="向右滚动"><svg width="4" height="7" fill="#333"><path d="M0 0v7l4-3.500z"/></svg></button>
  </div>
</nav>

<footer>
  <div class="status d-flex align-items-center ps-2 pe-2">
    <span class="me-auto">就绪</span>
    <button class="vw on" aria-label="普通"><svg class="ln" width="13" height="12"><path d="M.5.5h12v11H.5zM.5 4.500h12M.5 8.500h12M4.500 0v12M8.500 0v12"/></svg></button>
    <button class="vw" aria-label="页面布局"><svg class="ln" width="13" height="12"><path d="M.5.5h12v11H.5zM3.500 2.500h6v7h-6zM5 5h3M5 7h3"/></svg></button>
    <button class="vw" aria-label="分页预览"><svg class="ln" width="14" height="12"><path d="M.5.5h13v11H.5zM5.500 0v7h-5M8.500 0v7h5"/></svg></button>
    <button class="s20" aria-label="缩小"><svg class="ln" width="8" height="2"><path d="M0 1h8"/></svg></button>
    <input class="mx-2" type="range" min="10" max="190" value="90" aria-label="缩放">
    <button class="s10" aria-label="放大"><svg class="ln" width="9" height="9"><path d="M0 4.500h9M4.500 0v9"/></svg></button>
    <span class="ms-2 ps-1">100%</span>
  </div>

  <div class="task d-flex align-items-center">
    <div class="ghost" aria-hidden="true"><span>1 基础应用</span><span>1月</span><span>2月</span><span>3月</span><span>2 函数详解（IF)</span><span>3 函数详解（IFS)</span><span>4 其他常用函数</span><span>5 数组入门</span><span>6 函数常见错误</span></div>
    <button class="ap run" aria-label="浏览器"><svg width="32" height="32" viewBox="0 0 32 32"><circle cx="16" cy="16" r="12" fill="none" stroke="#3b9af0" stroke-width="7"/><path d="M5 22A12 12 0 0 1 16 4" fill="none" stroke="#8ecdfb" stroke-width="7"/><circle cx="16" cy="16" r="9" fill="#f3e9ec"/><path d="M15 31q-3-6 3-8 4-7 9-1 5 2 4 6-1 3-4 3z" fill="#fff"/></svg></button>
    <button class="ap run" aria-label="资源管理器"><svg width="32" height="32" viewBox="0 0 32 32"><path d="M1 4h8l2 3h20v22H2z" fill="#f4df8c" stroke="#c8a648"/><path d="M4 3h5v3H4z" fill="#39a845"/><path d="M12 5h5v3h-5z" fill="#d94d3b"/><path d="M21 7h6v3h-6z" fill="#3b95d4"/><path d="M3 11h26v14H3z" fill="#f9edb4"/><path d="M5 18q11-5 22 0v13h-5v-8H10v8H5z" fill="#a5d9f0" stroke="#5aa7d0"/></svg></button>
    <button class="ap"><span class="adobe pr">Pr</span></button>
    <button class="ap"><span class="adobe psd">Ps</span></button>
    <button class="ap"><span class="adobe ai">Ai</span></button>
    <button class="ap"><span class="adobe idd">Id</span></button>
    <button class="ap"><span class="adobe lr">Lr</span></button>
    <button class="ap" aria-label="视频"><svg width="32" height="32"><path d="M1 1h30v30H1z" fill="#20242b" stroke="#1097d8" stroke-width="2"/><path d="M6 9v14M10 9v14M22 9v14M26 9v14" stroke="#fff" stroke-width="2" stroke-dasharray="3 1"/><path d="M10 11h12v9H10z" fill="none" stroke="#fff" stroke-width="2"/></svg></button>
    <button class="ap" aria-label="图像"><svg width="32" height="32"><rect x="2" y="3" width="29" height="28" rx="4" fill="#f5f3f1"/><path d="M13 1l4 8L9 24l-7-4Q2 9 13 1" fill="#21973b"/><path d="M15 8q8 3 12 18-4 3-8 2z" fill="#d92c24"/><path d="M14 8l5 20q-6 1-9-4z" fill="#f0603a"/></svg></button>
    <button class="ap" aria-label="截图"><svg width="32" height="32"><rect width="32" height="31" rx="3" fill="#56c4e8"/><path d="M21 9q0-8 9-7-7 1-6 8 7 2 7 10v11H14Q9 28 9 23L6 19q-1-4 3-3l2 1q4-7 10-8z" fill="#fff"/><circle cx="18" cy="17" r="1" fill="#333"/><circle cx="27" cy="17" r="1" fill="#333"/><path d="M20 20q3 2 5 0" fill="none" stroke="#333"/><rect x="5" y="5" width="7" height="7" fill="none" stroke="#c5f0ff"/></svg></button>
    <button class="ap" aria-label="QQ"><svg id="qq" width="30" height="32" viewBox="0 0 30 32"><path d="M5 29h9v3H5zM16 29h9v3h-9z" fill="#f3a922"/><path d="M7 10a8 10 0 0 1 16 0v5q4 4 5 11-2 1-4-2 0 6-9 6t-9-6q-2 3-4 2 1-7 5-11z" fill="#111"/><ellipse cx="15" cy="23" rx="7" ry="7" fill="#fff"/><ellipse cx="12" cy="7" rx="2" ry="3" fill="#fff"/><ellipse cx="18" cy="7" rx="2" ry="3" fill="#fff"/><path d="M10 12h10l-5 3z" fill="#f3a922"/><path d="M6 15q9 4 18 0v4q-7 3-13 2v5H8v-6z" fill="#e02424"/></svg></button>
    <button class="ap" aria-label="Chrome"><svg width="32" height="32" viewBox="0 0 32 32"><circle cx="16" cy="16" r="15" fill="#de4b3e"/><path d="M3 9l7 11 6 11A15 15 0 0 1 3 9" fill="#3aa757"/><path d="M16 31l7-12V9h6a15 15 0 0 1-13 22" fill="#fbd038"/><circle cx="16" cy="16" r="7" fill="#fff"/><circle cx="16" cy="16" r="5.500" fill="#4c82ee"/></svg></button>
    <button class="ap" aria-label="猎豹"><svg width="32" height="32"><circle cx="16" cy="16" r="15" fill="#e9781f"/><path d="M5 14l6-6q7-5 12-2 6 3 6 9-1 6-6 9-4 3-5 7-4-2-2-6l3-5-4-1-4 3-5-1-1-4z" fill="#fff1de"/><path d="M12 11l4 1-3 1zM6 17l4 1 4-2" stroke="#e9781f" fill="none"/></svg></button>
    <button class="ap run" aria-label="记事本"><svg width="32" height="32"><path d="M11 3l17-1 1 23-12 4z" fill="#f3ebc6" stroke="#999"/><path d="M10 4l15-1-6 25L1 24z" fill="#6ab7c9" stroke="#d7eef2"/><path d="M10 4l15-1-3 12L5 13z" fill="#a4d8e2"/></svg></button>
    <button class="ap run front" aria-label="Excel"><svg width="34" height="30"><path d="M9 0h25v29H9z" fill="#21a366"/><path d="M9 8h12v7H9zM21 15h13v7H21z" fill="#107c41"/><path d="M9 15h12v14H9zM21 22h13v7H21z" fill="#185c37"/><path d="M21 0h13v8H21z" fill="#33c481"/><path d="M0 6h18v18H0z" fill="#107c41"/><path d="M5 10l8 10M13 10L5 20" stroke="#fff" stroke-width="2.500"/></svg></button>
    <div class="tray d-flex ms-auto align-items-center">
      <span><svg width="9" height="5" fill="#fff"><path d="M0 5h9L4.500 0z"/></svg></span>
      <span><svg width="15" height="17" viewBox="0 0 30 32"><use href="#qq"/></svg></span>
      <span><svg width="16" height="16"><path d="M2 0v16" stroke="#fff" stroke-width="2"/><path d="M4 1q4-1 5 1t5 0v7q-5 1-6-1t-4 0z" fill="#fff"/><circle cx="11" cy="11" r="5" fill="#d8232a"/><path d="M9 9l4 4M13 9l-4 4" stroke="#fff" stroke-width="1.500"/></svg></span>
      <span><svg width="15" height="15" fill="none" stroke="#fff" stroke-width="1.500"><path d="M2 0v4M5 0v4M0 4h7v3H0zM3 7v8M8 2h6v12H8z"/></svg></span>
      <span><svg width="15" height="14" fill="#fff"><path d="M0 4h3l4-4v14l-4-4H0z"/><path d="M9 4q2 3 0 6M11 2q4 5 0 10" fill="none" stroke="#fff"/></svg></span>
      <span><svg width="15" height="12" fill="#fff"><path d="M0 9h2v3H0zM3 7h2v5H3zM6 5h2v7H6zM9 3h2v9H9zM12 0h3v12h-3z"/></svg></span>
      <span class="ime">中</span>
      <span><svg width="15" height="15"><rect width="15" height="15" rx="3" fill="#ef5a24"/><path d="M12 4H5Q3 4 3 6t3 2h4q2 0 2 2t-2 2H3" fill="none" stroke="#fff" stroke-width="2"/></svg></span>
      <div class="clock ms-2 me-3">7:17<br>2020/7/26</div>
    </div>
  </div>
</footer>

<div class="wm" aria-hidden="true">
  <svg width="275" height="140" viewBox="1025 610 275 140">
    <g fill="#000" fill-opacity=".4"><text x="1076" y="666" font-size="20">激活 Windows</text><text x="1083" y="688" font-size="14">转到“电脑设置”以激活 Windows。</text></g>
    <g fill="#999" fill-opacity=".6"><circle cx="1035" cy="657" r="11"/><path d="M1030 667h10v24l-5 4-5-4z"/></g>
    <g fill="#fff" fill-opacity=".8" stroke="#aaa" stroke-opacity=".6" stroke-width="1.500"><ellipse cx="1158" cy="635" rx="9" ry="12"/><ellipse cx="1180" cy="636" rx="9" ry="12"/><ellipse cx="1142" cy="652" rx="9" ry="12"/><ellipse cx="1194" cy="657" rx="9" ry="11"/><path d="M1168 652q10 0 15 12 14 10 12 24-3 12-17 10-9-2-18 0-16 2-18-11 0-12 12-22 5-13 14-13z"/></g>
    <g class="brand" fill="#b0b0b0" stroke="#aaa" stroke-width="5" stroke-opacity=".5"><text x="1049" y="697" font-size="52">Baidu</text><text x="1204" y="693" font-size="42">经验</text></g>
    <g class="brand" fill="#c4c4c4" stroke="#fff" stroke-width="4"><text x="1049" y="697" font-size="52">Baidu</text><text x="1204" y="693" font-size="42">经验</text></g>
    <text class="site" x="1049" y="730" font-size="28" fill="#fff" fill-opacity=".9" stroke="#999" stroke-opacity=".5" stroke-width=".5">jingyan.baidu.com</text>
  </svg>
</div>
<script src="https://cdn.jsdelivr.net/npm/bootstrap@5.3.0/dist/js/bootstrap.bundle.min.js"></script>
</body>
</html>
